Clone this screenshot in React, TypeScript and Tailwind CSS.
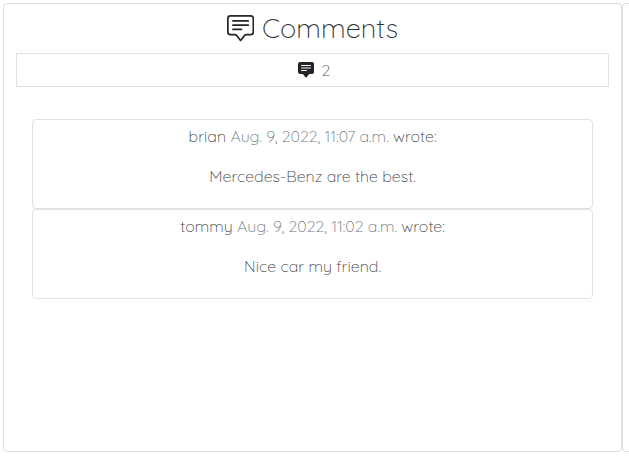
import { BsChatSquareText, BsChatSquareTextFill } from "react-icons/bs";

const comments = [
  { author: "brian", date: "Aug. 9, 2022, 11:07 a.m.", body: "Mercedes-Benz are the best." },
  { author: "tommy", date: "Aug. 9, 2022, 11:02 a.m.", body: "Nice car my friend." },
];

export default function App() {
  return (
    <div className="flex h-[457px] w-[629px] overflow-hidden bg-white pl-[3px] pt-[3px] font-['Quicksand','Lato',sans-serif] font-light text-[#212529]">
      <section className="h-[449px] w-[619px] shrink-0 rounded border border-[#dfdfdf] px-3 text-center">
        <h1 className="flex h-[49px] items-center justify-center gap-2 text-[27.2px] leading-[34px]">
          <BsChatSquareText className="size-[27.2px]" />
          <span className="-mt-px text-[#2f3337]">Comments</span>
        </h1>
        <div className="flex h-[34px] items-center justify-center gap-2 border border-[#dee2e6] pl-[3px] text-base">
          <BsChatSquareTextFill className="size-4" />
          <span className="text-[#50565b]">2</span>
        </div>
        <div className="px-4 pt-8">
          {comments.map((c) => (
            <article key={c.author} className="h-[90px] rounded border border-[#dee2e6] pt-1 text-base leading-6 text-[#3b4045]">
              <p className="mb-4">
                {c.author} <span className="text-[#6c757d]">{c.date}</span> wrote:
              </p>
              <p>{c.body}</p>
            </article>
          ))}
        </div>
      </section>
      <section className="h-[449px] w-[619px] shrink-0 rounded border border-[#dfdfdf]" />
    </div>
  );
}
